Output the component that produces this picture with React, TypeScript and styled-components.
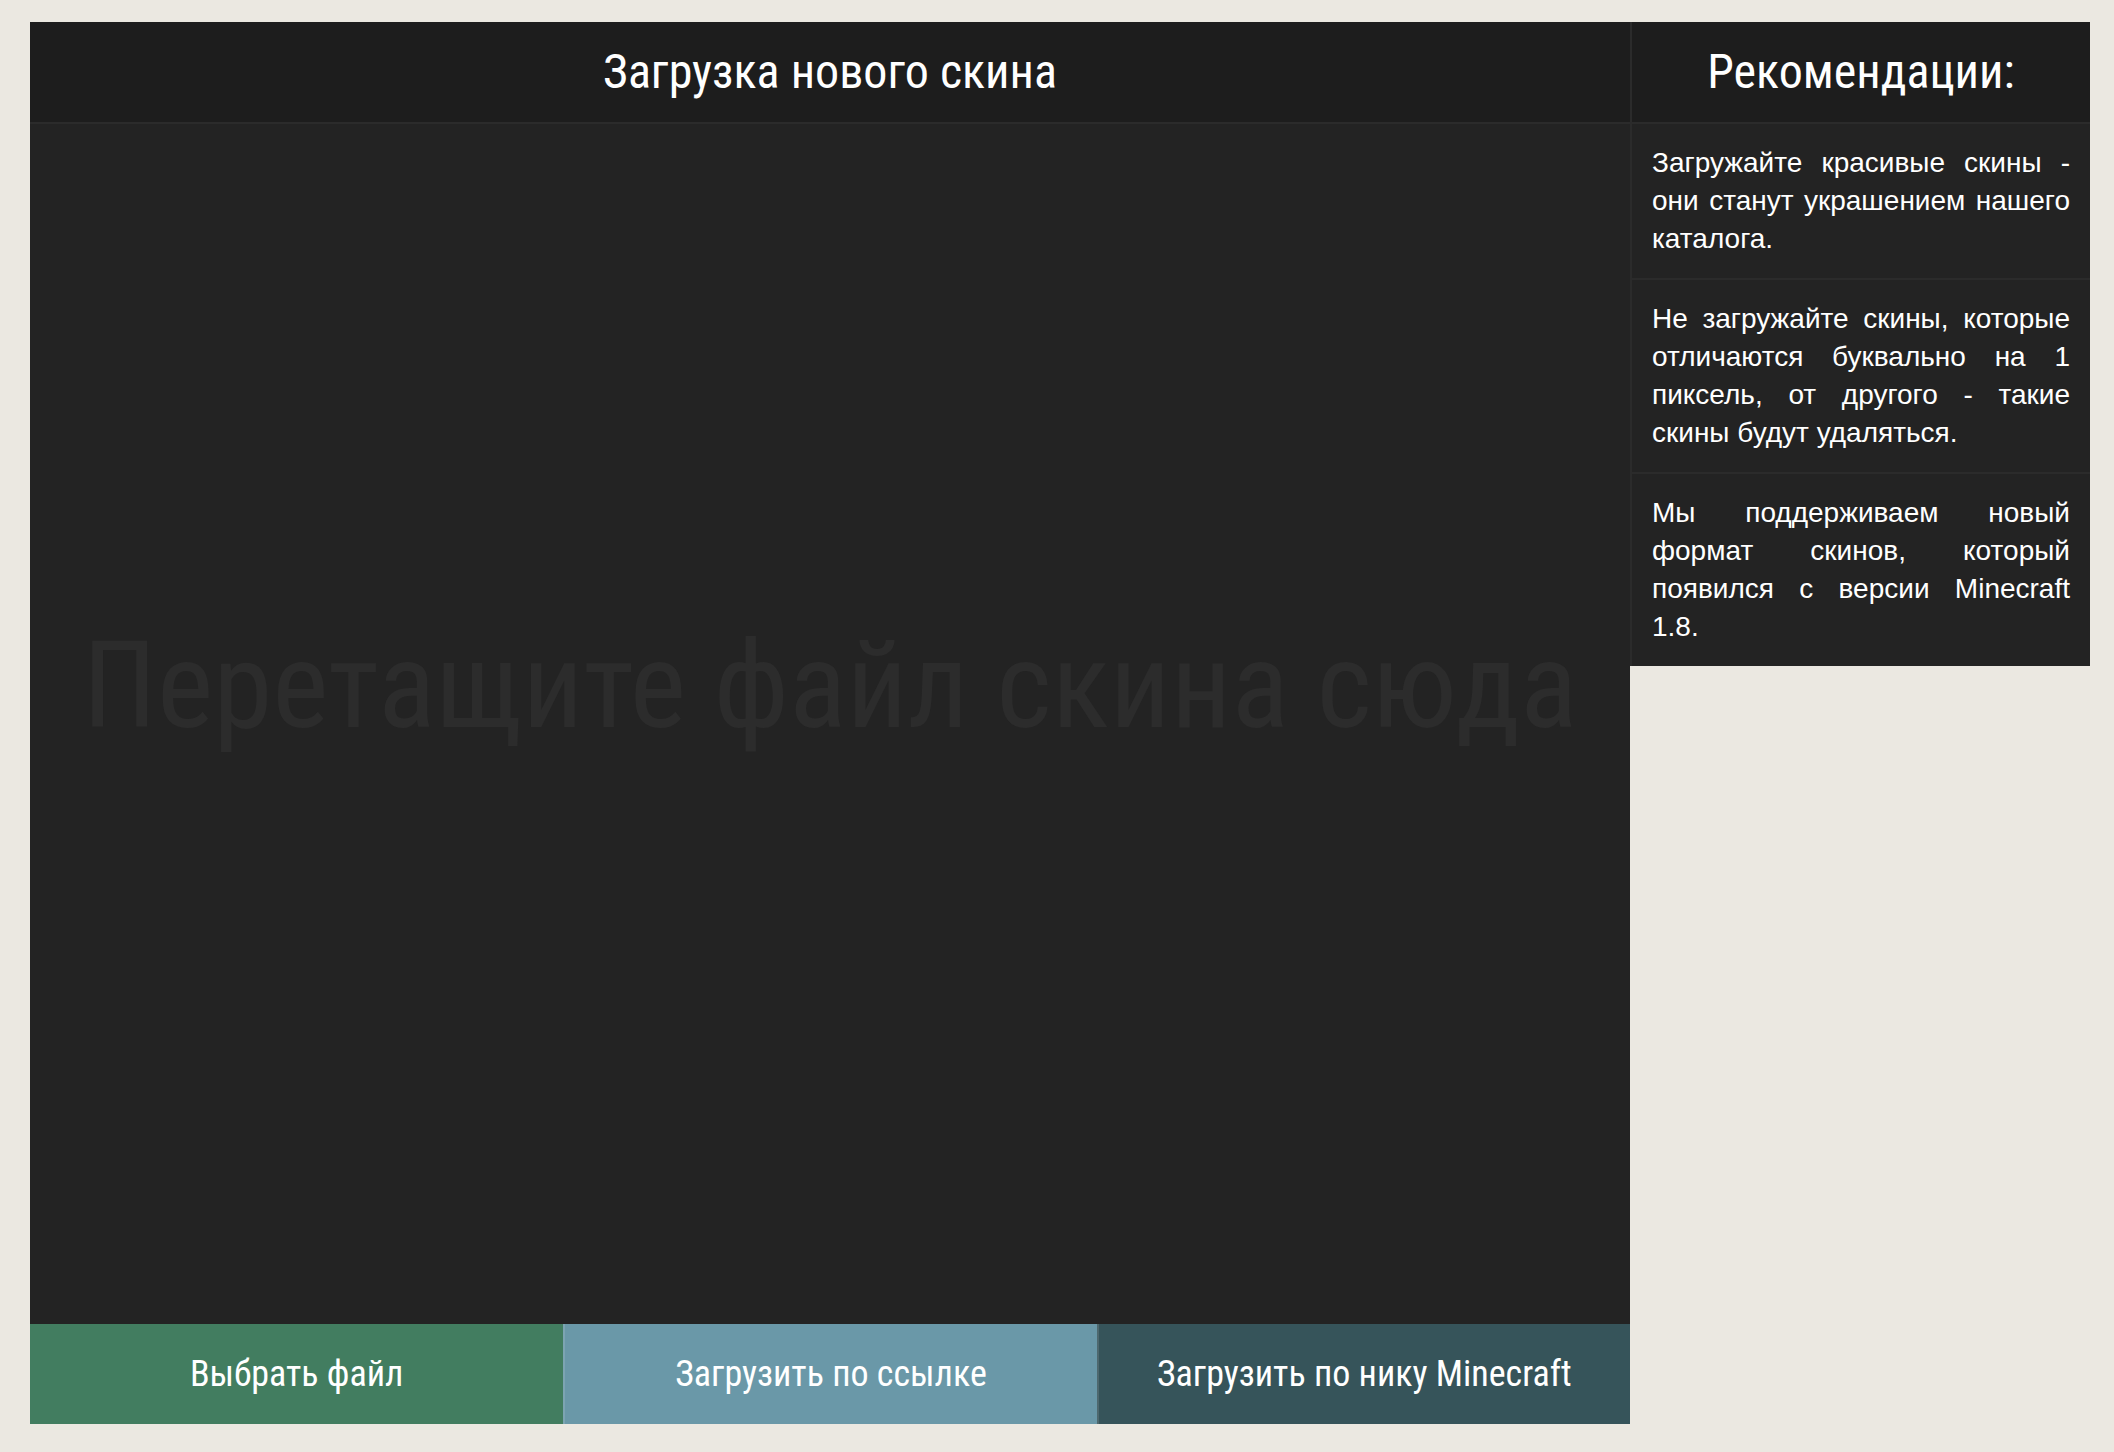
import React from 'react';
import styled, { createGlobalStyle } from 'styled-components';

const GlobalStyle = createGlobalStyle`
  html, body {
    margin: 0;
    padding: 0;
    background: #ebe8e1;
  }
  * {
    box-sizing: border-box;
  }
`;

const CONDENSED = `'Roboto Condensed', 'Liberation Sans Narrow', 'Roboto', sans-serif`;

const tips = [
  'Загружайте красивые скины - они станут украшением нашего каталога.',
  'Не загружайте скины, которые отличаются буквально на 1 пиксель, от другого - такие скины будут удаляться.',
  'Мы поддерживаем новый формат скинов, который появился с версии Minecraft 1.8.',
];

export default function App() {
  return (
    <>
      <GlobalStyle />
      <Page>
        <UploadPanel>
          <PanelHeader>Загрузка нового скина</PanelHeader>
          <DropZone>
            <DropText>Перетащите файл скина сюда</DropText>
          </DropZone>
          <ButtonRow>
            <ActionButton $bg="#427d60">Выбрать файл</ActionButton>
            <ActionButton $bg="#6a98a8" $edge>
              Загрузить по ссылке
            </ActionButton>
            <ActionButton $bg="#36545a" $edge>
              Загрузить по нику Minecraft
            </ActionButton>
          </ButtonRow>
        </UploadPanel>
        <Sidebar>
          <PanelHeader>Рекомендации:</PanelHeader>
          {tips.map((tip) => (
            <Tip key={tip}>{tip}</Tip>
          ))}
        </Sidebar>
      </Page>
    </>
  );
}

const Page = styled.div`
  display: flex;
  align-items: flex-start;
  padding: 22px 24px 30px 30px;
`;

const UploadPanel = styled.section`
  width: 1600px;
  display: flex;
  flex-direction: column;
  background: #232323;
`;

const PanelHeader = styled.h2`
  margin: 0;
  height: 102px;
  display: flex;
  align-items: center;
  justify-content: center;
  background: #1d1d1d;
  border-bottom: 2px solid #2b2b2b;
  color: #fff;
  font-family: ${CONDENSED};
  font-stretch: condensed;
  font-weight: 400;
  font-size: 48px;
  padding-bottom: 2px;
`;

const DropZone = styled.div`
  height: 1200px;
  display: flex;
  align-items: center;
  justify-content: center;
  padding-bottom: 76px;
`;

const DropText = styled.div`
  color: #2c2c2c;
  font-family: ${CONDENSED};
  font-stretch: condensed;
  font-size: 120px;
  white-space: nowrap;
`;

const ButtonRow = styled.div`
  display: grid;
  grid-template-columns: repeat(3, 1fr);
  height: 100px;
`;

const ActionButton = styled.button<{ $bg: string; $edge?: boolean }>`
  border: none;
  border-left: ${(p) => (p.$edge ? '2px solid rgba(255, 255, 255, 0.12)' : 'none')};
  background: ${(p) => p.$bg};
  color: #fff;
  font-family: ${CONDENSED};
  font-stretch: condensed;
  font-size: 36px;
  cursor: pointer;
  padding: 0;
`;

const Sidebar = styled.aside`
  width: 460px;
  display: flex;
  flex-direction: column;
  background: #232323;
  border-left: 2px solid #2b2b2b;
`;

const Tip = styled.p`
  margin: 0;
  padding: 20px;
  color: #fff;
  font-family: 'Liberation Sans', Arial, sans-serif;
  font-size: 28px;
  line-height: 38px;
  text-align: justify;
  border-bottom: 2px solid #2b2b2b;

  &:last-child {
    border-bottom: none;
  }
`;
